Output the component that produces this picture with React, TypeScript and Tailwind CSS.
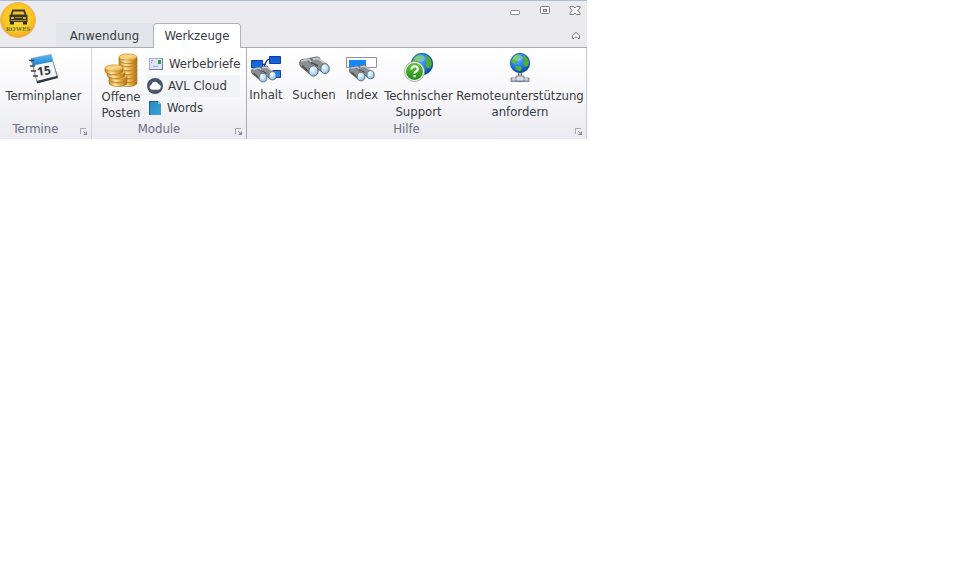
import type { ReactNode } from "react";

const LogoIcon = () => (
  <svg width="36" height="36" viewBox="0 0 36 36">
    <defs>
      <radialGradient id="logo-gold" cx="50%" cy="45%" r="55%">
        <stop offset="0" stopColor="#fbd640" />
        <stop offset="0.7" stopColor="#fcc724" />
        <stop offset="1" stopColor="#f5a91c" />
      </radialGradient>
    </defs>
    <circle cx="18" cy="18" r="17.4" fill="url(#logo-gold)" stroke="#e6b566" />
    <path d="M13 8.500h11l2 5H11z" fill="#f0bf35" stroke="#3b3a22" strokeWidth="1.800" />
    <path d="M9.500 13h18v7h-18z" fill="#3b3a22" />
    <path d="M10 20h4v2.500h-4zM23 20h4v2.500h-4z" fill="#2e2d1c" />
    <path d="M11 15h3v2h-3zM23 15h3v2h-3z" fill="#dba92a" />
    <path d="M15 15.500h7M11 18.500h15" stroke="#b08e2c" />
    <text x="18" y="28.500" textAnchor="middle" fontSize="6.500" fontWeight="700" fill="#4f7440" fontFamily="Liberation Serif, serif">ROWES</text>
  </svg>
);

const CalendarIcon = () => (
  <svg width="32" height="32" viewBox="0 0 32 32">
    <defs>
      <linearGradient id="cal-blue" x1="0" y1="0" x2="0" y2="1">
        <stop offset="0" stopColor="#5cb8ee" />
        <stop offset="1" stopColor="#1c80cc" />
      </linearGradient>
    </defs>
    <path d="M3 7l20-5 7 22-21 6z" fill="#45484c" />
    <path d="M3 5.500l20-4 6 22-20 5z" fill="#f4f6f8" stroke="#8b9299" strokeWidth="0.8" />
    <path d="M3 5.500l20-4 2 7-20 4z" fill="url(#cal-blue)" />
    <path d="M9 28l20-5 1 2-21 5.500z" fill="#33363a" />
    <g stroke="#3d4248" strokeWidth="1.500" fill="none">
      <path d="M1 7.500h5M2 13h5M3 18h5M5 23h5" />
    </g>
    <text x="9" y="22" fontSize="12" fontWeight="700" fill="#33383e" fontFamily="Noto Sans, sans-serif" transform="rotate(-8 17 18)">15</text>
  </svg>
);

const coinStack = (x: number, ys: number[]) =>
  ys.map((y) => (
    <g key={`${x}-${y}`}>
      <path d={`M${x - 9} ${y}v3a9 3.600 0 0 0 18 0v-3z`} fill="url(#coin-side)" stroke="#a66d19" strokeWidth="0.6" />
      <ellipse cx={x} cy={y} rx="9" ry="3.200" fill="url(#coin-top)" stroke="#c08a2a" strokeWidth="0.6" />
    </g>
  ));

const CoinsIcon = () => (
  <svg width="34" height="34" viewBox="0 0 34 34">
    <defs>
      <linearGradient id="coin-side">
        <stop offset="0" stopColor="#c28322" />
        <stop offset="0.35" stopColor="#ffe9a0" />
        <stop offset="0.7" stopColor="#dfa437" />
        <stop offset="1" stopColor="#a9681a" />
      </linearGradient>
      <linearGradient id="coin-top" x1="0" y1="0" x2="1" y2="1">
        <stop offset="0" stopColor="#f3c65c" />
        <stop offset="0.5" stopColor="#f8d887" />
        <stop offset="1" stopColor="#e0a53a" />
      </linearGradient>
    </defs>
    {coinStack(24, [27, 23, 19, 15, 11, 7, 4])}
    {coinStack(14, [27, 23])}
    {coinStack(12, [19])}
    {coinStack(10, [15])}
  </svg>
);

const LetterIcon = () => (
  <svg width="14" height="12" viewBox="0 0 14 12">
    <path d="M.5.500h13v11H.5z" fill="#e0e2f5" stroke="#a9aed0" />
    <path d="M0 11.500h14M13.500 0v12" stroke="#777d9e" />
    <path d="M9 2h3v4H9z" fill="#23a544" />
    <path d="M2 2.500h2M2 4.500h1" stroke="#8f95c8" />
    <path d="M4 8.500h5" stroke="#a4a8cc" />
  </svg>
);

const CloudIcon = () => (
  <svg width="16" height="16" viewBox="0 0 16 16">
    <circle cx="8" cy="8" r="8" fill="#47566b" />
    <path d="M4.800 11.700a2.600 2.600 0 0 1-.5-5 3.800 3.800 0 0 1 7.200-.5 2.800 2.800 0 0 1 .2 5.500z" fill="#fff" />
  </svg>
);

const DocumentIcon = () => (
  <svg width="12" height="15" viewBox="0 0 12 15">
    <defs>
      <linearGradient id="doc-blue" x1="0" y1="0" x2="1" y2="1">
        <stop offset="0" stopColor="#2b86bd" />
        <stop offset="1" stopColor="#3aa4dc" />
      </linearGradient>
    </defs>
    <path d="M0 0h9l3 3v11H0z" fill="url(#doc-blue)" />
    <path d="M9 0l3 3H9z" fill="#7cc0e6" />
    <path d="M0 .5h9M.5 0v14" stroke="#1c6699" />
  </svg>
);

const Binoculars = () => (
  <g>
    <g stroke="#5c6062" strokeWidth="9.500" strokeLinecap="round">
      <path d="M17 5.500l8 5.500M5 6.500l8.500 7" />
    </g>
    <path d="M4 6l9-2 5-1" stroke="#6c7072" strokeWidth="7" strokeLinecap="round" fill="none" />
    <path d="M17 5.500l8 5.500" stroke="#8b8f91" strokeWidth="7.500" strokeLinecap="round" />
    <path d="M5 6.500l8.500 7" stroke="#8b8f91" strokeWidth="7.500" strokeLinecap="round" />
    <path d="M2 4l8-1.500 6 6" stroke="#bfc3c5" strokeWidth="1.800" fill="none" />
    <path d="M13.500 2l5.500-.5 7 5" stroke="#c6c9cb" strokeWidth="1.800" fill="none" />
    <path d="M3 8.500l6 5.500M12 5.500l7 3.500" stroke="#46494b" strokeWidth="1.400" fill="none" />
    <ellipse cx="14.500" cy="14" rx="4.700" ry="5.200" fill="url(#lens)" stroke="#65696c" />
    <ellipse cx="26" cy="11.700" rx="4.300" ry="5" fill="url(#lens)" stroke="#65696c" />
  </g>
);

const LensDefs = () => (
  <defs>
    <radialGradient id="lens" cx="38%" cy="35%" r="68%">
      <stop offset="0" stopColor="#ffffff" />
      <stop offset="0.6" stopColor="#b5dcf8" />
      <stop offset="1" stopColor="#6faee4" />
    </radialGradient>
    <linearGradient id="node" x1="0" y1="0" x2="0" y2="1">
      <stop offset="0" stopColor="#0a5ad0" />
      <stop offset="1" stopColor="#1d8cff" />
    </linearGradient>
  </defs>
);

const ContentsIcon = () => (
  <svg width="32" height="28" viewBox="0 0 32 28">
    <LensDefs />
    <path d="M12 8.500h3q2-6 5-5M14 8q3 10 7 10" stroke="#1b2a9c" strokeWidth="1.400" fill="none" />
    <g fill="url(#node)" stroke="#1e3a9a">
      <path d="M1.500 4.500h11v7h-11zM19.500.500h11v7h-11zM19.500 14.500h11v7h-11z" />
    </g>
    <g transform="translate(1 10) scale(.83)">
      <Binoculars />
    </g>
  </svg>
);

const SearchIcon = () => (
  <svg width="31" height="28" viewBox="0 0 31 28">
    <g transform="translate(0 1)">
      <Binoculars />
    </g>
  </svg>
);

const IndexIcon = () => (
  <svg width="32" height="28" viewBox="0 0 32 28">
    <path d="M.5 1.500h30v10H.5z" fill="#fff" stroke="#8a90a8" />
    <path d="M3 4h17v7H3z" fill="#1687fb" />
    <g transform="translate(3 9) scale(.83)">
      <Binoculars />
    </g>
  </svg>
);

const Globe = ({ cx, cy, r }: { cx: number; cy: number; r: number }) => (
  <g transform={`translate(${cx} ${cy}) scale(${r / 10})`}>
    <circle r="10" fill="url(#sea)" />
    <path d="M-8-4Q-6-8-1-8.500L2-7 0-5-2-3-4-1-5 1-7 0-9-1z" fill="#5fba3c" />
    <path d="M4-8Q9-5 9 0L8 3 5 4 3 1 4-2 3-4z" fill="#4fae35" />
    <path d="M-4 3L0 3 2 5 0 8.500-3 7-5 5z" fill="#55b238" />
    <ellipse cx="-2" cy="-5" rx="5" ry="3" fill="#bfe6ff" opacity=".35" />
    <circle r="9.600" fill="none" stroke="#154fa0" strokeWidth=".8" opacity=".7" />
  </g>
);

const GlobeDefs = () => (
  <defs>
    <radialGradient id="sea" cx="40%" cy="30%" r="75%">
      <stop offset="0" stopColor="#5db4fa" />
      <stop offset="0.6" stopColor="#1c74dc" />
      <stop offset="1" stopColor="#0c3f96" />
    </radialGradient>
    <linearGradient id="help-green" x1="0" y1="0" x2="0" y2="1">
      <stop offset="0" stopColor="#62c436" />
      <stop offset="1" stopColor="#1d8a1b" />
    </linearGradient>
  </defs>
);

const SupportIcon = () => (
  <svg width="30" height="30" viewBox="0 0 30 30">
    <GlobeDefs />
    <Globe cx={18} cy={11} r={11} />
    <circle cx="10.500" cy="18.500" r="10" fill="#f4f6f4" stroke="#8f9a90" strokeWidth=".8" />
    <circle cx="10.500" cy="18.500" r="8.500" fill="url(#help-green)" />
    <path d="M7.500 16.500q0-3.200 3.200-3.200T13.800 16Q13.800 17.500 12 18.500T10.500 20.500M10.500 22v2.200" stroke="#fff" strokeWidth="2.200" fill="none" />
  </svg>
);

const RemoteIcon = () => (
  <svg width="22" height="30" viewBox="0 0 22 30">
    <path d="M11 19v6" stroke="#7c838a" strokeWidth="4" />
    <path d="M11 19v6" stroke="#cfd4d8" strokeWidth="1.500" />
    <path d="M2 25h18v3.500H2z" fill="#a9b0c4" stroke="#6f7586" strokeWidth=".8" />
    <path d="M7 23h8v5H7z" fill="#d8dce6" stroke="#6f7586" strokeWidth=".8" />
    <path d="M3 26h4M15 26h4" stroke="#eef0f6" />
    <Globe cx={11} cy={10} r={10} />
  </svg>
);

const LauncherIcon = () => (
  <svg width="8" height="8" viewBox="0 0 8 8" fill="none">
    <path d="M.5 6V.500H6M3 3l3 3" stroke="#a6a7b0" />
    <path d="M7 3v4H3z" fill="#8d8e97" />
  </svg>
);

function LargeButton({ icon, lines, className }: { icon: ReactNode; lines: string[]; className?: string }) {
  return (
    <button type="button" className={`flex shrink-0 flex-col items-center whitespace-nowrap pt-[5px] ${className ?? ""}`}>
      {icon}
      {lines.map((line) => (
        <span key={line}>{line}</span>
      ))}
    </button>
  );
}

function SmallButton({ icon, label, className }: { icon: ReactNode; label: string; className?: string }) {
  return (
    <button type="button" className={`flex h-[22px] items-center whitespace-nowrap ${className ?? ""}`}>
      {icon}
      {label}
    </button>
  );
}

function Group({ title, className, children }: { title: string; className: string; children: ReactNode }) {
  return (
    <section aria-label={title} className={`flex flex-col justify-between ${className}`}>
      <div className="flex h-[73px]">{children}</div>
      <div className="flex h-[18px] items-start">
        <h2 className="flex-1 text-center text-[#6c6e84]">{title}</h2>
        <button type="button" aria-label={`${title} Optionen`} className="flex w-5 justify-end pt-[7px] pr-[3px]">
          <LauncherIcon />
        </button>
      </div>
    </section>
  );
}

export default function App() {
  return (
    <div className="min-h-screen bg-white font-['DejaVu_Sans_Condensed','DejaVu_Sans',sans-serif] text-[13px] leading-4 text-[#3a3a3f]">
      <div className="w-full max-w-[587px]">
        <header className="flex h-12 border-t border-[#aabdd2] border-b border-b-[#a9abb5] bg-[#ebeaef]">
          <button type="button" aria-label="Menü" className="mt-px h-9 w-9">
            <LogoIcon />
          </button>
          <nav role="tablist" className="ml-5 -mb-px flex items-end">
            <button type="button" role="tab" aria-selected="false" className="mb-px h-6 w-[97px] bg-[#e2e6ea] pt-px text-center">
              Anwendung
            </button>
            <button type="button" role="tab" aria-selected="true" className="h-[25px] w-[88px] rounded-t border border-b-0 border-[#b0b2bd] bg-white text-center">
              Werkzeuge
            </button>
          </nav>
          <div className="ml-auto flex flex-col items-end justify-between pt-1 pr-[6px] pb-[6px]">
            <div className="flex gap-[18px]">
              <button type="button" aria-label="Minimieren">
                <svg width="12" height="12" viewBox="0 0 12 12">
                  <rect x="1.500" y="5.500" width="9" height="4" rx="1" fill="#fff" stroke="#8a8a90" />
                </svg>
              </button>
              <button type="button" aria-label="Wiederherstellen">
                <svg width="12" height="12" viewBox="0 0 12 12">
                  <rect x="1.500" y="1.500" width="9" height="7" rx="1" fill="#fff" stroke="#77777d" />
                  <rect x="4.500" y="4.500" width="3" height="2" fill="#ddd" stroke="#77777d" />
                </svg>
              </button>
              <button type="button" aria-label="Schließen">
                <svg width="12" height="12" viewBox="0 0 12 12">
                  <path d="M1 1.500h3.500L6 3l1.500-1.500H11V3L9 5.500 11 8v1.500H7.500L6 8 4.500 9.500H1V8l2-2.500L1 3z" fill="#fff" stroke="#77777d" />
                </svg>
              </button>
            </div>
            <button type="button" aria-label="Menüband minimieren">
              <svg width="10" height="10" viewBox="0 0 10 10" fill="none" stroke="#77777d">
                <path d="M1.500 4.500L5 1.500l3.500 3V7.500H7L5 5.500l-2 2H1.500z" fill="#fff" strokeLinejoin="round" />
              </svg>
            </button>
          </div>
        </header>

        <main className="flex h-[91px] bg-linear-to-b from-white via-[#f8f8fb] to-[#eaeaf0]">
          <Group title="Termine" className="w-[92px] border-r border-[#d4d5dc]">
            <LargeButton icon={<span className="mb-[3px]"><CalendarIcon /></span>} lines={["Terminplaner"]} className="w-[87px]" />
          </Group>
          <Group title="Module" className="w-[155px] border-r border-[#a9abb8]">
            <LargeButton icon={<span className="mb-[2px]"><CoinsIcon /></span>} lines={["Offene", "Posten"]} className="w-[55px] pl-[3px]" />
            <div className="flex flex-col pt-[5px]">
              <SmallButton icon={<LetterIcon />} label="Werbebriefe" className="gap-[6px] pl-[2px]" />
              <SmallButton icon={<CloudIcon />} label="AVL Cloud" className="gap-[5px] bg-[#f2f3f6]" />
              <SmallButton icon={<DocumentIcon />} label="Words" className="gap-[6px] pl-[2px]" />
            </div>
          </Group>
          <Group title="Hilfe" className="flex-1 border-r border-[#c9cad3]">
            <LargeButton icon={<span className="mt-[3px] mb-[3px]"><ContentsIcon /></span>} lines={["Inhalt"]} className="w-[38px]" />
            <LargeButton icon={<span className="mt-[3px] mb-[3px]"><SearchIcon /></span>} lines={["Suchen"]} className="w-[58px]" />
            <LargeButton icon={<span className="mt-[3px] mb-[3px]"><IndexIcon /></span>} lines={["Index"]} className="w-[38px]" />
            <LargeButton icon={<span className="mb-[5px]"><SupportIcon /></span>} lines={["Technischer", "Support"]} className="w-[75px]" />
            <LargeButton icon={<span className="mb-[5px]"><RemoteIcon /></span>} lines={["Remoteunterstützung", "anfordern"]} className="w-[128px]" />
          </Group>
        </main>
      </div>
    </div>
  );
}
